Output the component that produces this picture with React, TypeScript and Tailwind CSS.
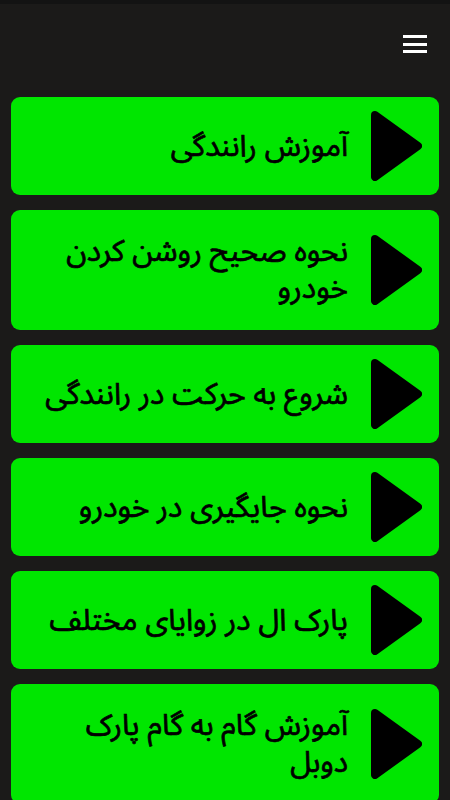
import React from 'react';

const lessons: string[][] = [
  ['آموزش رانندگی'],
  ['نحوه صحیح روشن کردن', 'خودرو'],
  ['شروع به حرکت در رانندگی'],
  ['نحوه جایگیری در خودرو'],
  ['پارک ال در زوایای مختلف'],
  ['آموزش گام به گام پارک', 'دوبل'],
];

const PlayTriangle = () => (
  <svg viewBox="0 0 51 70" className="w-[51px] h-[70px] shrink-0">
    <polygon points="4,4 47,35 4,66" fill="#000" stroke="#000" strokeWidth={8} strokeLinejoin="round" />
  </svg>
);

const LessonCard: React.FC<{ lines: string[] }> = ({ lines }) => (
  <div dir="rtl" className="mx-[11px] flex items-center gap-[23px] rounded-[9px] bg-[#00e600] py-[14px] pr-[17px] pl-4">
    <PlayTriangle />
    <p className="whitespace-nowrap py-[9px] text-[30px] leading-[37px] text-black [-webkit-text-stroke:0.7px_black]">
      {lines.map((l, i) => (
        <React.Fragment key={i}>
          {i > 0 && <br />}
          {l}
        </React.Fragment>
      ))}
    </p>
  </div>
);

export default function App() {
  return (
    <div className="min-h-[800px] bg-[#1b1a19]" style={{ fontFamily: '"Noto Sans Arabic", "DejaVu Sans", sans-serif' }}>
      <div className="h-1 bg-[#131313]" />
      <header className="flex h-[80px] items-center justify-end pr-[23px]">
        <button className="flex w-6 flex-col gap-[4.5px]" aria-label="menu">
          <span className="block h-[3px] w-6 bg-white" />
          <span className="block h-[3px] w-6 bg-white" />
          <span className="block h-[3px] w-6 bg-white" />
        </button>
      </header>
      <main className="flex flex-col gap-[15px] pt-[13px] pb-4">
        {lessons.map((lines, i) => (
          <LessonCard key={i} lines={lines} />
        ))}
      </main>
    </div>
  );
}
